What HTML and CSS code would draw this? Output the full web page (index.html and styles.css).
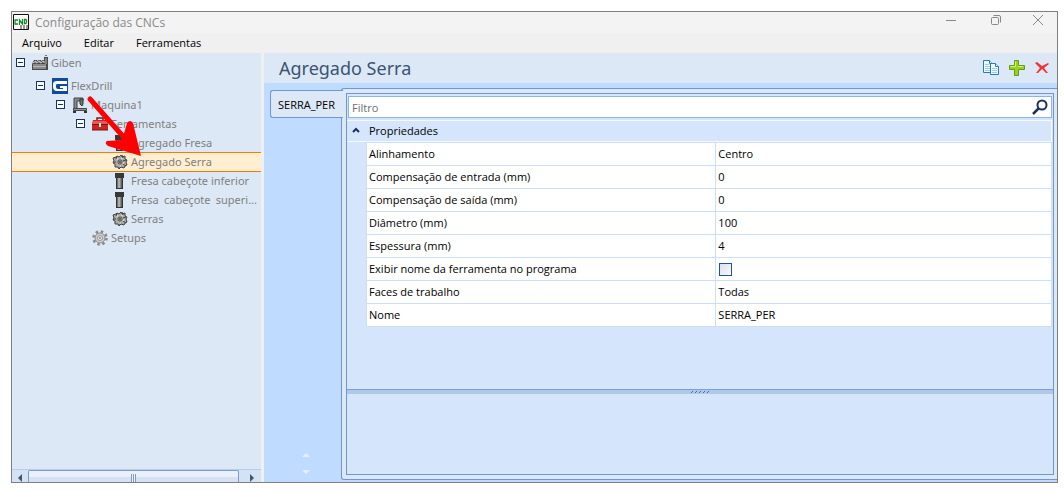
FILE: index.html
```html
<!DOCTYPE html>
<html lang="pt">
  <head>
    <meta charset="utf-8" />
    <meta name="viewport" content="width=device-width, initial-scale=1.0" />
    <title>Configuração das CNCs</title>
    <link rel="stylesheet" href="styles.css" />
  </head>
  <body>
    <!-- Shared icons -->
    <svg class="defs" width="0" height="0" aria-hidden="true">
      <defs>
        <linearGradient id="steel" x1="0" x2="1">
          <stop offset="0" stop-color="#555" />
          <stop offset="0.4" stop-color="#c4c4c4" />
          <stop offset="1" stop-color="#4c4c4c" />
        </linearGradient>
        <symbol id="mill" viewBox="0 0 16 16">
          <path d="M3 0h9v5H3z" fill="#383838" />
          <path d="M4 5h7v11H4z" fill="#333" />
          <path d="M5 5h5v10H5z" fill="url(#steel)" />
        </symbol>
        <symbol id="saw" viewBox="0 0 16 16">
          <path d="M5 2l2 1 2-2 1 2 3-1v3l2 1-1 2 1 3-2 1-1 2-3-1-2 2-1-2-3 0v-3l-2-1 1-2-1-3 3-1z" fill="#aaaaa6" stroke="#42423f" />
          <path d="M5 2l-1 3M10 1l1 3M14 6l-3 1M14 12l-3-2M7 14l0-3M1 8l3 0" stroke="#42423f" />
          <path d="M5 6l1-2M9 4l2 1M12 8l-1 2M6 12l3 0" stroke="#e4e4e0" />
          <circle cx="8" cy="8" r="2" fill="#fff" stroke="#444" />
          <circle cx="8" cy="8" r="1" fill="#333" />
        </symbol>
      </defs>
    </svg>

    <div class="window">
      <header class="titlebar">
        <svg class="app-icon" width="16" height="16" viewBox="0 0 16 16">
          <path d="M.5.5h15v15H.5z" fill="#fff" stroke="#111" />
          <path d="M5 6H2v4h3M6.500 11V6l3 4V5M11.500 5.500v4h1.500q1.500-2 0-4z" fill="none" stroke="#138a25" stroke-width="1.300" />
          <path d="M7 12h8M7 14h8" stroke="#999" stroke-dasharray="2 1" stroke-width="2" />
        </svg>
        <span class="title">Configuração das CNCs</span>
        <div class="caption-buttons">
          <button aria-label="Minimizar">
            <svg width="12" height="12"><path d="M1 6.500h10" stroke="#888" /></svg>
          </button>
          <button aria-label="Restaurar">
            <svg width="12" height="12" fill="none" stroke="#888"><rect x="1.500" y="3.500" width="7" height="7" rx="1" /><path d="M3.500 1.500H9q1.500 0 1.500 1.500v5.500" /></svg>
          </button>
          <button aria-label="Fechar">
            <svg width="12" height="12"><path d="M1 1l10 10M11 1L1 11" stroke="#888" /></svg>
          </button>
        </div>
      </header>

      <nav class="menubar">
        <button>Arquivo</button>
        <button>Editar</button>
        <button>Ferramentas</button>
      </nav>

      <div class="content">
        <aside class="sidebar">
          <ul class="tree">
            <li class="node level-0">
              <button class="toggle" aria-label="Recolher Giben"></button>
              <svg width="16" height="16" viewBox="0 0 16 16">
                <path d="M0 15V9l2-4h3v1l2-1h2v1l2-1h1V2h4v13z" fill="#4a4a4a" />
                <path d="M1 9h13v5H1z" fill="#8b8b8b" />
                <path d="M1 8l3-2v2l4-2v2l4-2v2" fill="none" stroke="#d5d5d5" />
                <path d="M1 11.500h13" stroke="#b5b5b5" />
                <path d="M13 0h2v1h-2z" fill="#777" />
                <path d="M14 3v6" stroke="#bbb" />
              </svg>
              <span>Giben</span>
            </li>
            <li class="node level-1">
              <button class="toggle" aria-label="Recolher FlexDrill"></button>
              <svg width="16" height="16" viewBox="0 0 16 16">
                <path d="M0 0h16v16H0z" fill="#0d4c96" />
                <path d="M15 3H5Q1 3 1 6v3q0 4 4 4h10V8H8v2h3v1H6q-2 0-2-2V7q0-1 2-1h9z" fill="#fff" />
              </svg>
              <span>FlexDrill</span>
            </li>
            <li class="node level-2">
              <button class="toggle" aria-label="Recolher Maquina1"></button>
              <svg width="16" height="16" viewBox="0 0 16 16">
                <path d="M2 1h9v3H5v8H2z" fill="#888" stroke="#444" />
                <path d="M8 2h3v5l-1 2-2-2z" fill="#777" stroke="#333" />
                <path d="M1.500 11.500h13v2h-13z" fill="#999" stroke="#444" />
                <path d="M1 15h3M12 15h3" stroke="#333" stroke-width="2" />
              </svg>
              <span>Maquina1</span>
            </li>
            <li class="node level-3">
              <button class="toggle" aria-label="Recolher Ferramentas"></button>
              <svg width="16" height="16" viewBox="0 0 16 16">
                <path d="M5 4V2h6v2" fill="none" stroke="#7d1c1c" stroke-width="1.500" />
                <path d="M1 4h14l1 4v6H0V8z" fill="#cb2424" />
                <path d="M1 5h14l1 3H0z" fill="#e75a50" />
                <path d="M0 8.500h16M0 14h16" stroke="#821111" />
                <path d="M7 7h2v4H7z" fill="#eee" />
              </svg>
              <span>Ferramentas</span>
            </li>
            <li class="node level-4">
              <svg width="16" height="16"><use href="#mill" /></svg>
              <span>Agregado Fresa</span>
            </li>
            <li class="node level-4 selected">
              <svg width="16" height="16"><use href="#saw" /></svg>
              <span>Agregado Serra</span>
            </li>
            <li class="node level-4">
              <svg width="16" height="16"><use href="#mill" /></svg>
              <span>Fresa cabeçote inferior</span>
            </li>
            <li class="node level-4">
              <svg width="16" height="16"><use href="#mill" /></svg>
              <span class="justified">Fresa cabeçote superi...</span>
            </li>
            <li class="node level-4">
              <svg width="16" height="16"><use href="#saw" /></svg>
              <span>Serras</span>
            </li>
            <li class="node level-3 leaf">
              <svg width="16" height="16" viewBox="0 0 16 16">
                <circle cx="8" cy="8" r="6.500" fill="none" stroke="#8a8a8a" stroke-width="2.500" stroke-dasharray="2.500 2.600" />
                <circle cx="8" cy="8" r="5" fill="#ccc" stroke="#8a8a8a" />
                <circle cx="8" cy="8" r="2.500" fill="#e8e8e8" stroke="#999" />
                <circle cx="8" cy="8" r="1" fill="#888" />
              </svg>
              <span>Setups</span>
            </li>
          </ul>
          <div class="scrollbar">
            <button aria-label="Rolar para a esquerda">
              <svg width="6" height="8"><path d="M5 0v8L1 4z" fill="#46556f" /></svg>
            </button>
            <div class="track"><div class="thumb"></div></div>
            <button aria-label="Rolar para a direita">
              <svg width="6" height="8"><path d="M1 0v8l4-4z" fill="#46556f" /></svg>
            </button>
          </div>
          <svg class="pointer" width="60" height="66" viewBox="0 0 60 66">
            <path d="M4 6L42 49" stroke="#f00" stroke-width="5" stroke-linecap="round" />
            <path d="M55 63L22 53Q18 50 21 48L35 47L37 44L41 30Q44 26 47 30z" fill="#f00" />
          </svg>
        </aside>

        <main class="editor">
          <div class="editor-header">
            <h1>Agregado Serra</h1>
            <div class="toolbar">
              <button aria-label="Copiar">
                <svg width="17" height="16" viewBox="0 0 17 16" stroke="#1f7fb5" fill="#eefaff">
                  <path d="M.5.5h6l3 3v9h-9z" />
                  <path d="M2 4.500h4M2 6.500h5M2 8.500h5M2 10.500h5" stroke="#9dcce4" />
                  <path d="M7.500 3.500h5l3 3v8h-8z" />
                  <path d="M6.500.5v3h3M12.500 3.500v3h3" />
                  <path d="M9 8.500h5M9 10.500h5M9 12.500h5" stroke="#9dcce4" />
                </svg>
              </button>
              <button aria-label="Adicionar">
                <svg width="16" height="16" viewBox="0 0 16 16">
                  <path d="M5.500.5h4v5h6v4h-6v6h-4v-6h-5v-4h5z" fill="#9bd01c" stroke="#659c17" />
                  <path d="M6.500 6.500v-5M1.500 6.500h5M9 6.500h5" stroke="#d5f08b" />
                </svg>
              </button>
              <button aria-label="Excluir">
                <svg width="16" height="16" viewBox="0 0 16 16">
                  <path d="M1 3l2-1 5 4 6-3 1 1-5 4 4 5-2 0-4-4-4 4-2 0 4-5z" fill="#f03434" />
                </svg>
              </button>
            </div>
          </div>

          <div class="editor-body">
            <div class="tabs">
              <button class="tab">SERRA_PER</button>
              <div class="tab-scroll">
                <button aria-label="Aba anterior"><svg width="8" height="5"><path d="M4 0l4 4H0z" fill="#e3efff" /></svg></button>
                <button aria-label="Próxima aba"><svg width="8" height="5"><path d="M0 0h8L4 4z" fill="#e3efff" /></svg></button>
              </div>
            </div>

            <section class="page">
              <div class="grid">
                <div class="filter">
                  <input type="text" placeholder="Filtro" aria-label="Filtro" />
                  <button aria-label="Pesquisar">
                    <svg width="16" height="16" viewBox="0 0 16 16" fill="none" stroke="#1d3263">
                      <circle cx="10" cy="6" r="4.500" stroke-width="2" />
                      <path d="M6.500 9.500L1 15" stroke-width="2.500" />
                    </svg>
                  </button>
                </div>
                <button class="category">
                  <svg width="8" height="6"><path d="M1 5l3-3 3 3" fill="none" stroke="#1d3263" stroke-width="2" /></svg>
                  Propriedades
                </button>
                <table class="properties">
                  <tr><th scope="row">Alinhamento</th><td>Centro</td></tr>
                  <tr><th scope="row">Compensação de entrada (mm)</th><td>0</td></tr>
                  <tr><th scope="row">Compensação de saída (mm)</th><td>0</td></tr>
                  <tr><th scope="row">Diâmetro (mm)</th><td>100</td></tr>
                  <tr><th scope="row">Espessura (mm)</th><td>4</td></tr>
                  <tr>
                    <th scope="row"><label for="show-name">Exibir nome da ferramenta no programa</label></th>
                    <td><input type="checkbox" id="show-name" /></td>
                  </tr>
                  <tr><th scope="row">Faces de trabalho</th><td>Todas</td></tr>
                  <tr><th scope="row">Nome</th><td>SERRA_PER</td></tr>
                </table>
                <div class="splitter">
                  <svg width="20" height="4"><path d="M1 3l2-2M5 3l2-2M9 3l2-2M13 3l2-2M17 3l2-2" stroke="#3c6fc0" /></svg>
                </div>
                <div class="description"></div>
              </div>
            </section>
          </div>
        </main>
      </div>
    </div>
  </body>
</html>
```
FILE: styles.css
```css
* {
  box-sizing: border-box;
}

body {
  margin: 0;
  padding: 11px 6px 8px 11px;
  height: 100vh;
  background-color: #fff;
  font-family: "Open Sans", "Noto Sans", sans-serif;
  font-size: 11px;
  color: #000;
}

svg {
  display: block;
  flex: none;
}

button {
  padding: 0;
  border: none;
  background: none;
  font: inherit;
  color: inherit;
}

.defs {
  position: absolute;
}

.window {
  display: flex;
  flex-direction: column;
  height: 100%;
  border: 1px solid #7f7f7f;
  background-color: #f0f0f0;
}

/* Title bar and menu */
.titlebar {
  display: flex;
  align-items: center;
  height: 21px;
  padding-left: 1px;
  background-color: #f3f3f3;
}

.app-icon {
  margin-bottom: 2px;
}

.title {
  flex: 1;
  margin-left: 6px;
  font-size: 12px;
  line-height: 20px;
  color: #8a8a8a;
}

.caption-buttons {
  display: flex;
  height: 100%;
}

.caption-buttons button {
  display: flex;
  justify-content: center;
  width: 46px;
  padding-top: 2px;
}

.caption-buttons button:first-child {
  width: 44px;
}

.caption-buttons button:last-child {
  width: 38px;
}

.menubar {
  display: flex;
  gap: 22px;
  height: 20px;
  padding: 0 0 2px 10px;
}

/* Tree */
.content {
  display: flex;
  flex: 1;
  min-height: 0;
}

.sidebar {
  position: relative;
  display: flex;
  flex-direction: column;
  width: 249px;
  margin-right: 3px;
  background-color: #dde8f6;
}

.tree {
  flex: 1;
  margin: 0;
  padding: 0;
  list-style: none;
}

.node {
  display: flex;
  align-items: center;
  gap: 3px;
  height: 19px;
  padding-right: 4px;
  font-family: "Noto Sans", sans-serif;
  line-height: 18px;
  color: #808080;
  white-space: nowrap;
}

.level-0 {
  margin-bottom: 4px;
  padding-left: 4px;
}

.level-1 {
  padding-left: 24px;
}

.level-2 {
  padding-left: 44px;
}

.level-3 {
  padding-left: 64px;
}

.level-3.leaf {
  padding-left: 80px;
}

.level-4 {
  padding-left: 100px;
}

.selected {
  height: 20px;
  margin-bottom: -1px;
  border-top: 1px solid #f57c00;
  border-bottom: 1px solid #f57c00;
  background-color: #ffefd0;
}

.justified {
  flex: 1;
  text-align-last: justify;
}

.toggle {
  width: 9px;
  height: 9px;
  margin-right: 4px;
  border: 1px solid #15316b;
  background: linear-gradient(#15316b, #15316b) center / 5px 1px no-repeat #fff;
}

.scrollbar {
  display: flex;
  height: 13px;
  border-top: 1px solid #b9cce8;
  background-color: #d3e2f5;
}

.scrollbar button {
  display: flex;
  justify-content: center;
  width: 16px;
  padding-top: 4px;
}

.track {
  flex: 1;
  padding-right: 4px;
}

.scrollbar button:last-child {
  width: 18px;
}

.thumb {
  height: 100%;
  border: 1px solid #7f9dcb;
  border-bottom: none;
  border-radius: 2px 2px 0 0;
  background:
    repeating-linear-gradient(90deg, #8199c4 0 1px, #f0f5fc 1px 2px) center bottom / 5px 8px no-repeat,
    linear-gradient(#e9f1fd 50%, #d6e2f4 50%);
}

.pointer {
  position: absolute;
  left: 74px;
  top: 40px;
}

/* Editor */
.editor {
  display: flex;
  flex: 1;
  flex-direction: column;
  min-width: 0;
  background-color: #bfdbff;
}

.editor-header {
  display: flex;
  align-items: center;
  justify-content: space-between;
  height: 30px;
  padding: 0 7px 0 15px;
  background-color: #dde8f6;
}

h1 {
  margin: 0;
  font-family: "Noto Sans", sans-serif;
  font-size: 18px;
  font-weight: 400;
  line-height: 30px;
  color: #3b5472;
}

.toolbar {
  display: flex;
  gap: 9px;
}

.editor-body {
  display: flex;
  flex: 1;
  min-height: 0;
  padding: 5px 0 2px 6px;
}

.tabs {
  display: flex;
  flex-direction: column;
  justify-content: space-between;
  width: 71px;
  padding: 2px 0 5px;
}

/* The tab runs over the page border so that the two join up */
.tab {
  z-index: 1;
  width: 73px;
  height: 28px;
  padding-right: 1px;
  border: 1px solid #6b98d4;
  border-right: none;
  border-radius: 3px 0 0 3px;
  background-color: #dde8f6;
}

.tab-scroll {
  display: flex;
  flex-direction: column;
  align-items: center;
  gap: 12px;
}

.page {
  display: flex;
  flex: 1;
  min-width: 0;
  padding: 4px 3px 4px 4px;
  border: 1px solid #6b98d4;
  border-right: none;
  border-radius: 3px 0 0 3px;
  background-color: #dde8f6;
}

.grid {
  display: flex;
  flex: 1;
  flex-direction: column;
  border: 1px solid #6b98d4;
  background-color: #d4e5fc;
}

.filter {
  display: flex;
  align-items: center;
  height: 22px;
  margin: 2px 1px;
  padding-right: 3px;
  border: 1px solid #8fb3e6;
  background-color: #fff;
}

.filter input {
  flex: 1;
  padding: 0 3px;
  border: none;
  outline: none;
  font: inherit;
}

.filter input::placeholder {
  color: #6d6d6d;
  opacity: 1;
}

.category {
  display: flex;
  align-items: center;
  gap: 9px;
  height: 22px;
  margin-right: 1px;
  padding: 0 0 2px 5px;
  border: 1px solid #f4f9ff;
  border-left: none;
}

.properties {
  margin: 0 1px 0 19px;
  border-collapse: collapse;
  table-layout: fixed;
}

.properties th,
.properties td {
  height: 23px;
  padding: 0 2px;
  border: 1px solid #cddff7;
  background-color: #fff;
  font-weight: 400;
  line-height: 16px;
  text-align: left;
}

.properties th {
  width: 51%;
}

.properties td {
  width: 49%;
}

.properties input {
  display: block;
  appearance: none;
  width: 13px;
  height: 13px;
  margin: 0 1px;
  border: 1px solid #1f5591;
  background: linear-gradient(135deg, #dcdfea, #fafafe);
}

.splitter {
  display: flex;
  justify-content: center;
  height: 5px;
  margin-top: auto;
  border-top: 1px solid #799fd6;
  background-color: #b0c7e8;
}

.description {
  height: 80px;
}
```
